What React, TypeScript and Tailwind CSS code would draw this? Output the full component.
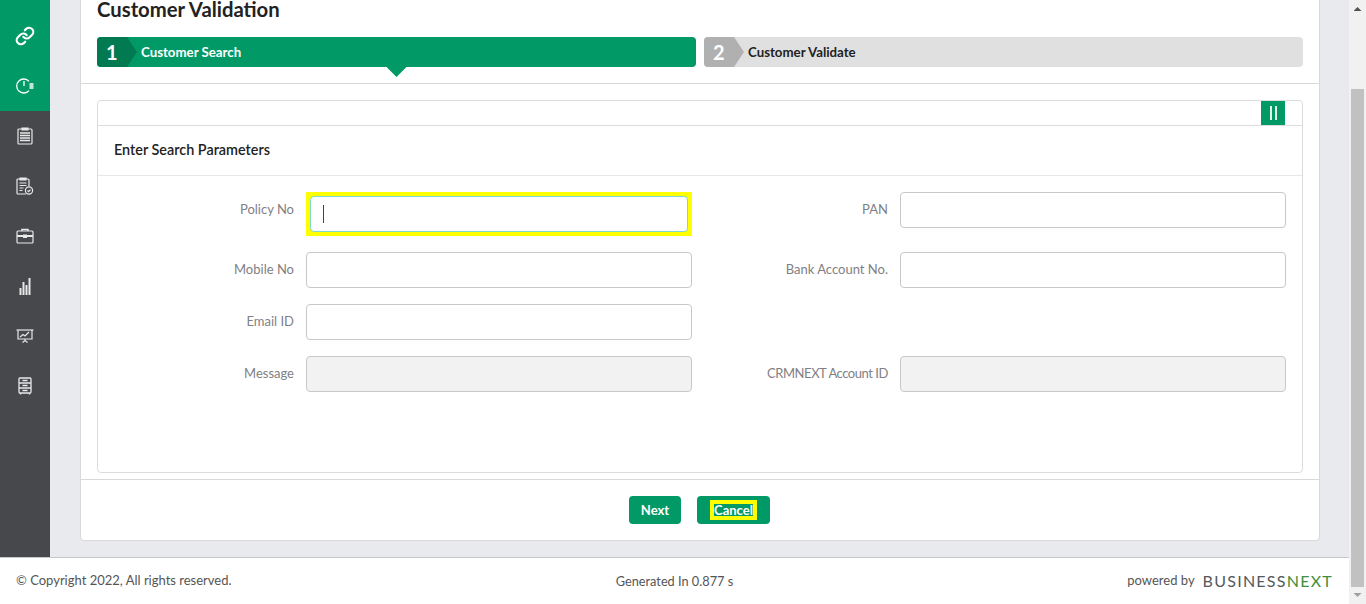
import { Link } from 'lucide-react'

const font = { fontFamily: '"Lato", "Noto Sans", sans-serif' }

function TimerIcon() {
  return (
    <svg width="18" height="16" viewBox="0 0 18 16" fill="none" stroke="currentColor" strokeWidth="1.3">
      <path d="M13 3.4A7 7 0 1 0 13 12.6" />
      <path d="M8 3v5" />
      <rect x="13.5" y="5" width="4" height="6" fill="currentColor" stroke="none" opacity="0.75" />
    </svg>
  )
}

function ListIcon() {
  return (
    <svg width="16" height="18" viewBox="0 0 16 18" fill="none" stroke="currentColor" strokeWidth="1.2">
      <rect x="1" y="2" width="14" height="15" rx="1" />
      <path d="M5 1h6v2H5z" fill="currentColor" />
      <path d="M3 6h10M3 8.5h10M3 11h10M3 13.5h10" strokeWidth="1.4" />
    </svg>
  )
}

function ChecklistIcon() {
  return (
    <svg width="18" height="18" viewBox="0 0 18 18" fill="none" stroke="currentColor" strokeWidth="1.2">
      <path d="M10 17H2a1 1 0 0 1-1-1V3a1 1 0 0 1 1-1h10a1 1 0 0 1 1 1v6" />
      <path d="M4 1h6v2H4z" fill="currentColor" />
      <path d="M3.5 6h7M3.5 8.5h7M3.5 11h4M3.5 13.5h3" />
      <circle cx="13" cy="13.5" r="3.6" />
      <path d="M11.5 13.5l1.2 1.2 1.8-2" />
    </svg>
  )
}

function CaseIcon() {
  return (
    <svg width="18" height="16" viewBox="0 0 18 16" fill="none" stroke="currentColor" strokeWidth="1.2">
      <path d="M6 3V1.5h6V3" strokeWidth="1.6" />
      <rect x="1" y="3" width="16" height="12" rx="1" />
      <path d="M1 8h16" strokeWidth="2" />
      <rect x="7" y="6.5" width="4" height="3.5" fill="currentColor" stroke="none" />
    </svg>
  )
}

function BarsIcon() {
  return (
    <svg width="12" height="18" viewBox="0 0 12 18" fill="currentColor">
      <rect x="0.5" y="11" width="2" height="7" />
      <rect x="3.5" y="5" width="2" height="13" />
      <rect x="6.5" y="8" width="2" height="10" />
      <rect x="9.5" y="1" width="2" height="17" />
    </svg>
  )
}

function BoardIcon() {
  return (
    <svg width="18" height="14" viewBox="0 0 18 14" fill="none" stroke="currentColor" strokeWidth="1.2">
      <path d="M0.5 1h17" />
      <path d="M2 1v9h14V1" />
      <path d="M4 8l3-2.5 2 1.5 4-4" />
      <path d="M9 10v1.5M6.5 13.5L9 11.5l2.5 2" />
    </svg>
  )
}

function CabinetIcon() {
  return (
    <svg width="14" height="18" viewBox="0 0 14 18" fill="none" stroke="currentColor" strokeWidth="1.3">
      <rect x="1" y="1" width="12" height="15" rx="1" />
      <path d="M1 6h12M1 11h12" />
      <path d="M4.5 3.5h5M4.5 8.5h5M4.5 13.5h5" />
      <path d="M2.5 16v1.5M11.5 16v1.5" />
    </svg>
  )
}

function SideItem({ children, className = '' }: { children: React.ReactNode; className?: string }) {
  return (
    <div className={`h-[50px] flex items-center justify-center text-[#e8e8e8] ${className}`}>{children}</div>
  )
}

function Field({ label, disabled, focused, labelClass = '' }: { label: string; disabled?: boolean; focused?: boolean; labelClass?: string }) {
  return (
    <div className="flex items-start">
      <label className={`w-[208px] h-9 pr-3 pb-0.5 flex items-center justify-end text-[13px] text-[#7f8084] leading-none ${labelClass}`}>
        {label}
      </label>
      {focused ? (
        <div className="w-[386px] h-11 p-1 bg-[#ffff00]">
          <div className="h-9 bg-white rounded border border-[#7fd8cf] flex items-center pl-3">
            <div className="w-px h-[18px] bg-[#444]" />
          </div>
        </div>
      ) : (
        <div className={`w-[386px] h-9 rounded border border-[#c8c8c8] ${disabled ? 'bg-[#f2f2f2]' : 'bg-white'}`} />
      )}
    </div>
  )
}

function Step({ num, label, active }: { num: number; label: string; active?: boolean }) {
  return (
    <div className={`relative flex-1 h-[30px] rounded flex items-center ${active ? 'bg-[#019a66] text-white' : 'bg-[#e0e0e0] text-[#222]'}`}>
      <div
        className={`w-10 h-full rounded-l pl-[9px] flex items-center text-xl font-bold text-white [clip-path:polygon(0_0,30px_0,40px_50%,30px_100%,0_100%)] ${active ? 'bg-[#017a52]' : 'bg-[#b0b0b0]'}`}
      >
        {num}
      </div>
      <span className="ml-1 pt-0.5 text-[13.25px] font-bold">{label}</span>
      {active && (
        <div className="absolute left-1/2 -ml-2.5 top-full w-5 h-2.5 bg-[#019a66] [clip-path:polygon(0_0,100%_0,50%_100%)]" />
      )}
    </div>
  )
}

export default function App() {
  return (
    <div className="h-[604px] flex overflow-hidden bg-white" style={font}>
      <div className="w-[1349px] shrink-0 flex flex-col">
        <div className="h-[557px] flex">
          <aside className="w-[50px] shrink-0 bg-[#47484c]">
            <div className="h-[111px] bg-[#019a66] pt-[11px]">
              <SideItem className="text-white"><Link size={20} strokeWidth={2.6} /></SideItem>
              <SideItem className="text-white"><TimerIcon /></SideItem>
            </div>
            <SideItem><ListIcon /></SideItem>
            <SideItem><ChecklistIcon /></SideItem>
            <SideItem><CaseIcon /></SideItem>
            <SideItem><BarsIcon /></SideItem>
            <SideItem><BoardIcon /></SideItem>
            <SideItem><CabinetIcon /></SideItem>
          </aside>

          <main className="flex-1 bg-[#e9eaee] pl-[30px] pr-[29px]">
            <div className="h-[541px] bg-white border-x border-b border-[#d8d8d8] rounded-b flex flex-col">
              <div className="h-[84px] shrink-0 border-b border-[#d8d8d8] px-4">
                <h1 className="h-[37px] text-[20.3px] font-bold text-[#222] leading-[18px]">Customer Validation</h1>
                <div className="flex gap-2">
                  <Step num={1} label="Customer Search" active />
                  <Step num={2} label="Customer Validate" />
                </div>
              </div>

              <div className="h-[395px] shrink-0 px-4 pt-4 pb-[6px]">
                <div className="h-[373px] border border-[#dcdcdc] rounded">
                  <div className="h-[25px] border-b border-[#dcdcdc] flex justify-end pr-[17px]">
                    <div className="w-6 h-6 bg-[#019a66] flex items-center justify-center gap-[3px]">
                      <div className="w-[2px] h-3.5 bg-[#e8efe6]" />
                      <div className="w-[2px] h-3.5 bg-[#e8efe6]" />
                    </div>
                  </div>
                  <div className="h-[50px] border-b border-[#e6e6e6] flex items-center pl-4 pb-0.5 text-[14.4px] font-semibold text-[#222]">
                    Enter Search Parameters
                  </div>
                  <div className="grid grid-cols-[594px_594px] gap-y-4 pt-4">
                    <Field label="Policy No" focused />
                    <Field label="PAN" />
                    <Field label="Mobile No" />
                    <Field label="Bank Account No." />
                    <Field label="Email ID" />
                    <div />
                    <Field label="Message" disabled />
                    <Field label="CRMNEXT Account ID" disabled labelClass="tracking-[-0.45px]" />
                  </div>
                </div>
              </div>

              <div className="flex-1 border-t border-[#d8d8d8] flex items-center justify-center gap-4 pr-px">
                <button className="w-[52px] h-7 pt-0.5 rounded bg-[#019a66] text-white text-[13px] font-bold">Next</button>
                <button className="w-[73px] h-7 rounded bg-[#019a66] text-white text-[13px] font-bold flex items-center justify-center">
                  <span className="w-[47px] h-5 border-4 border-[#ffff00] leading-[12px] flex items-center justify-center">Cancel</span>
                </button>
              </div>
            </div>
          </main>
        </div>

        <footer className="h-[47px] border-t border-[#c8c8cc] grid grid-cols-3 items-center px-4 text-[13px] text-[#555]">
          <span>© Copyright 2022, All rights reserved.</span>
          <span className="text-center text-[12.75px] pt-px">Generated In 0.877 s</span>
          <span className="flex items-center justify-end gap-2">
            powered by
            <span className="text-base tracking-[1.25px] text-[#55595c]">BUSINESS<span className="text-[#3f8f3f]">NEXT</span></span>
          </span>
        </footer>
      </div>

      <div className="w-[17px] shrink-0 bg-[#f1f1f1] flex flex-col items-center">
        <div className="h-[89px] w-full pt-[7px] flex justify-center">
          <div className="w-2 h-1 bg-[#505050] [clip-path:polygon(50%_0,100%_100%,0_100%)]" />
        </div>
        <div className="w-[13px] h-[498px] bg-[#c1c1c1]" />
        <div className="pt-[6px]">
          <div className="w-2 h-1 bg-[#a0a0a0] [clip-path:polygon(0_0,100%_0,50%_100%)]" />
        </div>
      </div>
    </div>
  )
}
